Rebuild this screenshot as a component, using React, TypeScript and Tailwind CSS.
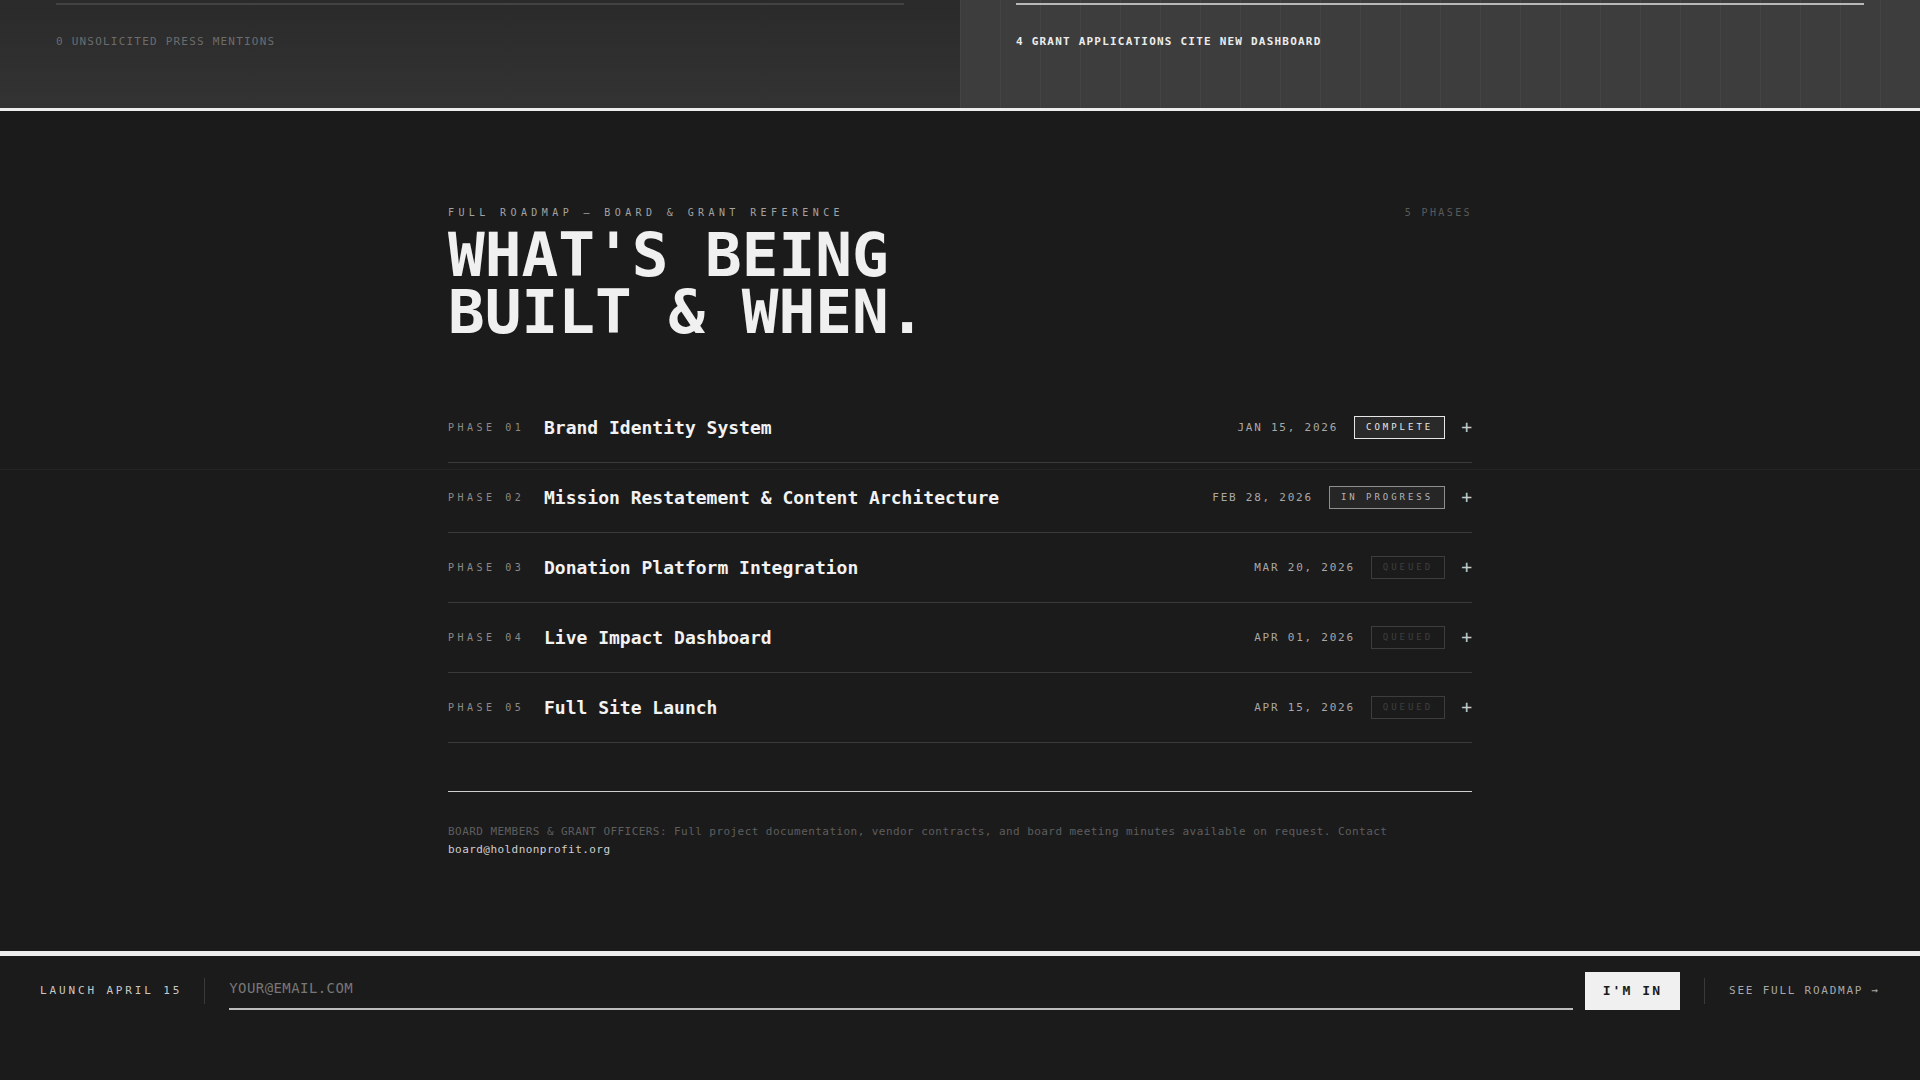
import React from 'react';

type Status = 'COMPLETE' | 'IN PROGRESS' | 'QUEUED';

const phases: { n: string; title: string; date: string; status: Status }[] = [
  { n: '01', title: 'Brand Identity System', date: 'JAN 15, 2026', status: 'COMPLETE' },
  { n: '02', title: 'Mission Restatement & Content Architecture', date: 'FEB 28, 2026', status: 'IN PROGRESS' },
  { n: '03', title: 'Donation Platform Integration', date: 'MAR 20, 2026', status: 'QUEUED' },
  { n: '04', title: 'Live Impact Dashboard', date: 'APR 01, 2026', status: 'QUEUED' },
  { n: '05', title: 'Full Site Launch', date: 'APR 15, 2026', status: 'QUEUED' },
];

const badgeStyles: Record<Status, string> = {
  COMPLETE: 'border-[#e6e6e6] bg-[#2a2a2a] text-[#e6e6e6]',
  'IN PROGRESS': 'border-[#8f8f8f] bg-[#262626] text-[#b4b4b4]',
  QUEUED: 'border-[#3d3d3d] text-[#3f3f3f]',
};

const PhaseRow: React.FC<{ n: string; title: string; date: string; status: Status }> = ({ n, title, date, status }) => (
  <div className="flex h-[70px] items-center border-b border-[#3a3a3a]">
    <span className="w-24 shrink-0 text-[10px] leading-4 tracking-[0.35em] text-[#8a8a8a]">PHASE {n}</span>
    <span className="text-[18px] font-bold leading-6 text-[#f2f2f2]">{title}</span>
    <div className="ml-auto flex items-center gap-4">
      <span className="text-[11px] leading-4 tracking-[0.16em] text-[#a8a8a8]">{date}</span>
      <span className={`border px-[11px] py-[4px] text-[9px] leading-[13px] tracking-[0.33em] ${badgeStyles[status]}`}>
        {status}
      </span>
      <span className="-translate-y-px text-[18px] leading-none text-[#c8c8c8]">+</span>
    </div>
  </div>
);

export default function App() {
  return (
    <div className="min-h-[1080px] bg-[#1b1b1b] font-['DejaVu_Sans_Mono',monospace]">
      {/* tail end of the stat cards */}
      <div className="grid grid-cols-2 border-b-[3px] border-[#ededed]">
        <div className="h-[108px] bg-linear-to-b from-[#2a2a2a] to-[#333333] px-14 pt-[3px]">
          <div className="h-[2px] bg-[#434343]" />
          <p className="mt-[29px] text-[11px] leading-4 tracking-[0.11em] text-[#6c6c6c]">0 UNSOLICITED PRESS MENTIONS</p>
        </div>
        <div className="h-[108px] bg-[#3d3d3d] bg-[linear-gradient(to_right,rgba(255,255,255,0.035)_1px,transparent_1px)] bg-[length:40px_40px] px-14 pt-[3px]">
          <div className="h-[2px] bg-[#b8b8b8]" />
          <p className="mt-[29px] text-[11px] font-bold leading-4 tracking-[0.11em] text-[#ececec]">
            4 GRANT APPLICATIONS CITE NEW DASHBOARD
          </p>
        </div>
      </div>

      <section className="relative bg-[#1b1b1b] pt-[97px] pb-[93px]">
        <div className="pointer-events-none absolute inset-x-0 top-[358px] h-px bg-[#242424]" />
        <div className="relative mx-auto max-w-5xl">
          <div className="flex items-center justify-between">
            <p className="text-[10px] leading-[10px] tracking-[0.44em] text-[#a3a3a3]">FULL ROADMAP — BOARD &amp; GRANT REFERENCE</p>
            <p className="text-[10px] leading-[10px] tracking-[0.24em] text-[#5a5a5a]">5 PHASES</p>
          </div>
          <h2 className="mt-[8px] text-[61px] font-bold leading-[57px] text-[#f0f0f0]">
            WHAT'S BEING
            <br />
            BUILT &amp; WHEN.
          </h2>

          <div className="mt-[53px]">
            {phases.map((p) => (
              <PhaseRow key={p.n} {...p} />
            ))}
          </div>

          <div className="mt-[48px] border-t border-[#cfcfcf] pt-[31px]">
            <p className="text-[11px] leading-[17.5px] tracking-[0.04em] text-[#5e5e5e]">
              BOARD MEMBERS &amp; GRANT OFFICERS: Full project documentation, vendor contracts, and board meeting minutes
              available on request. Contact <span className="text-[#cfcfcf]">board@holdnonprofit.org</span>
            </p>
          </div>
        </div>
      </section>

      <footer className="border-t-[5px] border-[#ededed] bg-[#1b1b1b] px-10 pt-4 pb-[70px]">
        <div className="flex h-[38px] items-center">
          <span className="text-[11px] leading-4 tracking-[0.26em] text-[#c8c8c8]">LAUNCH APRIL 15</span>
          <div className="ml-[22px] mr-6 h-[26px] w-px bg-[#3a3a3a]" />
          <input
            type="email"
            placeholder="YOUR@EMAIL.COM"
            className="h-[38px] flex-1 border-b-2 border-[#bdbdbd] bg-transparent pb-1 text-[14px] tracking-[0.03em] text-[#dddddd] outline-none placeholder:text-[#777777]"
          />
          <button className="ml-3 h-[38px] bg-[#f0f0f0] px-[18px] text-[13px] font-bold tracking-[0.16em] text-[#1b1b1b]">
            I'M IN
          </button>
          <div className="mx-6 h-[26px] w-px bg-[#3a3a3a]" />
          <a className="text-[11px] leading-4 tracking-[0.16em] text-[#a8a8a8]">SEE FULL ROADMAP →</a>
        </div>
      </footer>
    </div>
  );
}
